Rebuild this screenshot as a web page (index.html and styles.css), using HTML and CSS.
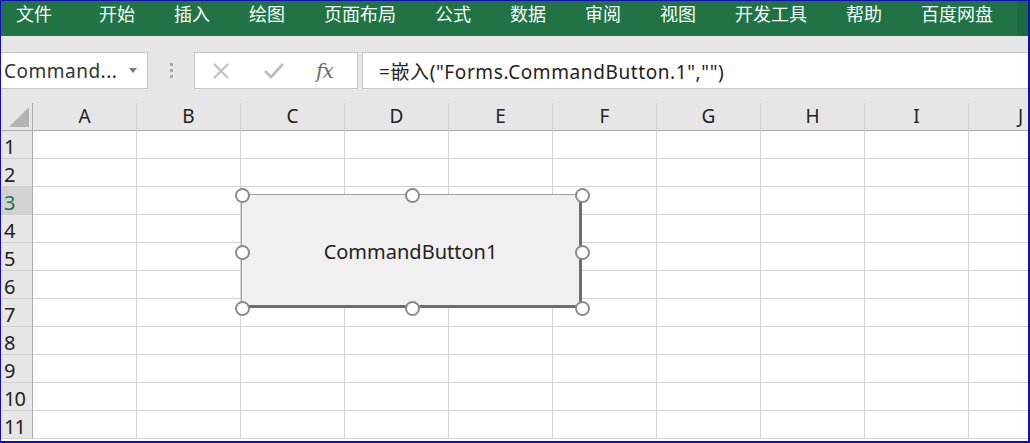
FILE: index.html
```html
<!DOCTYPE html>
<html lang="zh">
  <head>
    <meta charset="UTF-8" />
    <title>Excel - CommandButton</title>
    <link rel="stylesheet" href="styles.css">
  </head>
  <body>
    <div class="app">
      <div class="ribbon">
        <span class="tab first">文件</span>
        <span class="tab">开始</span>
        <span class="tab">插入</span>
        <span class="tab">绘图</span>
        <span class="tab">页面布局</span>
        <span class="tab">公式</span>
        <span class="tab">数据</span>
        <span class="tab">审阅</span>
        <span class="tab">视图</span>
        <span class="tab">开发工具</span>
        <span class="tab">帮助</span>
        <span class="tab">百度网盘</span>
        <div class="ribbonEnd"></div>
      </div>

      <div class="formulaBar">
        <div class="nameBox">
          <span>Command...</span>
          <svg class="dropArrow" width="8" height="5" viewBox="0 0 8 5"><path d="M0 0h8L4 5z" fill="#7a7a7a"/></svg>
        </div>
        <div class="grip"><i></i><i></i><i></i></div>
        <div class="fxBox">
          <svg class="cancelIcon" width="20" height="20" viewBox="0 0 20 20"><path d="M3 3L17 17M17 3L3 17" stroke="#bdbdbd" stroke-width="2"/></svg>
          <svg class="enterIcon" width="22" height="20" viewBox="0 0 22 20"><path d="M2 10l6 6L20 3" stroke="#bdbdbd" stroke-width="2.8" fill="none"/></svg>
          <span class="fx">fx</span>
        </div>
        <div class="formulaInput">=嵌入("Forms.CommandButton.1","")</div>
      </div>

      <div class="sheet">
        <div class="corner"><div class="selectAll"></div></div>
        <div class="colHead">A</div>
        <div class="colHead">B</div>
        <div class="colHead">C</div>
        <div class="colHead">D</div>
        <div class="colHead">E</div>
        <div class="colHead">F</div>
        <div class="colHead">G</div>
        <div class="colHead">H</div>
        <div class="colHead">I</div>
        <div class="colHead">J</div>
      </div>

      <div class="embeddedButton">
        <div class="btnFace">CommandButton1</div>
        <span class="handle h-tl"></span>
        <span class="handle h-tm"></span>
        <span class="handle h-tr"></span>
        <span class="handle h-ml"></span>
        <span class="handle h-mr"></span>
        <span class="handle h-bl"></span>
        <span class="handle h-bm"></span>
        <span class="handle h-br"></span>
      </div>
    </div>

    <script>
      // build the rows of the grid
      const sheet = document.querySelector(".sheet");
      for (let r = 1; r <= 11; r++) {
        const head = document.createElement("div");
        head.className = r === 3 ? "rowHead active" : "rowHead";
        head.textContent = r;
        sheet.appendChild(head);
        for (let c = 0; c < 10; c++) {
          const cell = document.createElement("div");
          cell.className = "cell";
          sheet.appendChild(cell);
        }
      }
    </script>
  </body>
</html>
```

FILE: styles.css
```css
body {
  margin: 0;
  font-family: "Noto Sans", "Noto Sans CJK SC", sans-serif;
  background-color: #fff;
}

.app {
  position: relative;
  width: 1030px;
  height: 443px;
  box-sizing: border-box;
  border: 1px solid #1010b8;
  border-right-width: 2px;
  border-bottom-width: 2px;
  overflow: hidden;
  background-color: #fff;
}

.ribbon {
  height: 35px;
  background-color: #217346;
  display: flex;
  align-items: center;
  padding-left: 15px;
  font-family: "Noto Sans CJK SC", sans-serif;
}

.tab {
  flex: none;
  white-space: nowrap;
  color: #f4fff8;
  font-size: 18px;
  line-height: 24px;
  margin-top: -11px;
  margin-right: 39px;
}

.tab.first {
  margin-right: 47px;
}

.tab:last-of-type {
  margin-right: 0;
}

.ribbonEnd {
  margin-left: auto;
  width: 11px;
  height: 35px;
  background-color: #1d6a40;
}

.formulaBar {
  height: 67px;
  background-color: #e6e6e6;
  display: flex;
  align-items: flex-start;
  padding-top: 16px;
  box-sizing: border-box;
}

.nameBox,
.fxBox,
.formulaInput {
  height: 37px;
  box-sizing: border-box;
  background-color: #fff;
  border: 1px solid #c6c6c6;
  display: flex;
  align-items: center;
}

.nameBox {
  width: 148px;
  padding-left: 3px;
  font-size: 19px;
  letter-spacing: 0.5px;
  color: #333;
  margin-left: -1px;
}

.dropArrow {
  margin-left: auto;
  margin-right: 10px;
}

.grip {
  width: 46px;
  display: flex;
  flex-direction: column;
  align-items: center;
  gap: 3px;
  padding-top: 11px;
}

.grip i {
  width: 3px;
  height: 3px;
  background-color: #a8a8a8;
}

.fxBox {
  width: 164px;
  padding-left: 16px;
}

.enterIcon {
  margin-left: 32px;
}

.fx {
  margin-left: 31px;
  font-family: "DejaVu Serif", serif;
  font-style: italic;
  font-size: 20px;
  color: #6a6a6a;
  letter-spacing: -1px;
}

.formulaInput {
  flex: 1;
  margin-left: 4px;
  margin-right: -2px;
  padding-left: 16px;
  font-size: 19px;
  letter-spacing: 0.6px;
  color: #222;
}

.sheet {
  display: grid;
  grid-template-columns: 32px repeat(10, 104px);
  grid-auto-rows: 28px;
}

.corner,
.colHead,
.rowHead {
  background-color: #e6e6e6;
  box-sizing: border-box;
}

.corner {
  border-right: 1px solid #ababab;
  border-bottom: 1px solid #ababab;
  position: relative;
}

.selectAll {
  position: absolute;
  right: 3px;
  bottom: 3px;
  width: 0;
  height: 0;
  border-left: 20px solid transparent;
  border-bottom: 20px solid #b4b4b4;
}

.colHead {
  border-right: 1px solid #d0d0d0;
  border-bottom: 1px solid #ababab;
  text-align: center;
  font-size: 19px;
  line-height: 27px;
  color: #222;
}

.rowHead {
  border-right: 1px solid #ababab;
  border-bottom: 1px solid #d0d0d0;
  font-size: 20px;
  line-height: 31px;
  color: #222;
  padding-left: 3px;
  white-space: nowrap;
  letter-spacing: -1px;
}

.rowHead.active {
  background-color: #d2d2d2;
  color: #217346;
}

.cell {
  box-sizing: border-box;
  border-right: 1px solid #d4d4d4;
  border-bottom: 1px solid #d4d4d4;
}

/* the ActiveX button floats over the grid */
.embeddedButton {
  position: absolute;
  left: 240px;
  top: 193px;
  width: 341px;
  height: 114px;
}

.btnFace {
  width: 100%;
  height: 100%;
  box-sizing: border-box;
  background-color: #f0f0f0;
  border: 1px solid #a0a0a0;
  border-right: 3px solid #6e6e6e;
  border-bottom: 3px solid #6e6e6e;
  display: flex;
  align-items: center;
  justify-content: center;
  font-size: 20px;
  color: #222;
  padding-top: 2px;
}

.handle {
  position: absolute;
  width: 11px;
  height: 11px;
  border: 2px solid #8c8c8c;
  border-radius: 50%;
  background-color: #fff;
  margin: -7px 0 0 -7px;
}

.h-tl { left: 1px; top: 1px; }
.h-tm { left: 171px; top: 1px; }
.h-tr { left: 341px; top: 1px; }
.h-ml { left: 1px; top: 58px; }
.h-mr { left: 341px; top: 58px; }
.h-bl { left: 1px; top: 114px; }
.h-bm { left: 171px; top: 114px; }
.h-br { left: 341px; top: 114px; }
```
